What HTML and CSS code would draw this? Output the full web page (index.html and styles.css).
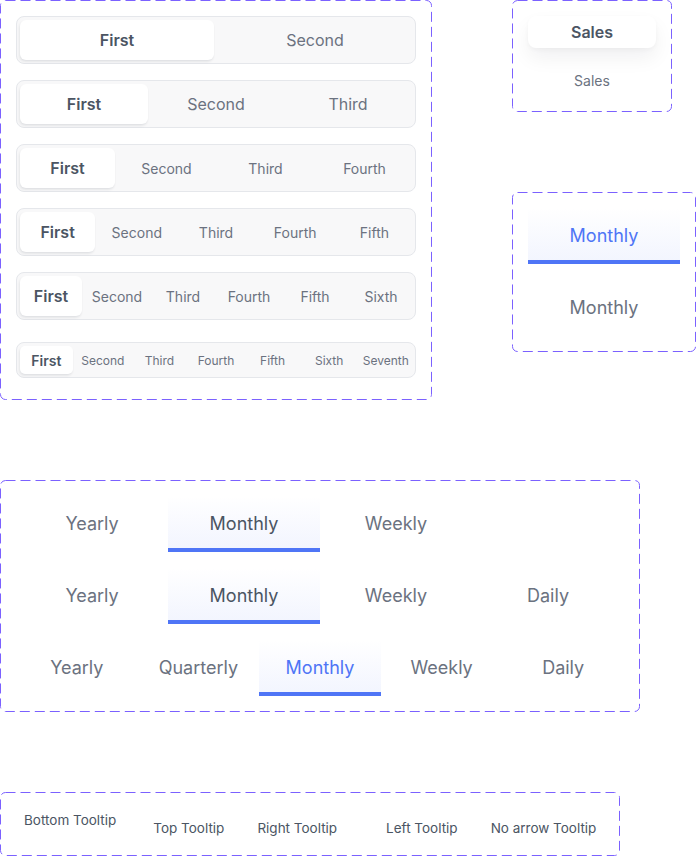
FILE: index.html
```html
<!DOCTYPE html>
<html lang="en">
<head>
<meta charset="utf-8">
<title>Components</title>
<link rel="stylesheet" href="styles.css">
</head>
<body>
<div class="canvas">
  <div class="top-row">
    <div class="frame frame-seg">
      <svg class="dash" width="432" height="400"><rect x="0.5" y="0.5" width="431" height="399" rx="5"/></svg>
      <div class="seg seg-lg">
        <div class="seg-item active">First</div>
        <div class="seg-item">Second</div>
      </div>
      <div class="seg seg-lg">
        <div class="seg-item active">First</div>
        <div class="seg-item">Second</div>
        <div class="seg-item">Third</div>
      </div>
      <div class="seg seg-md">
        <div class="seg-item active">First</div>
        <div class="seg-item">Second</div>
        <div class="seg-item">Third</div>
        <div class="seg-item">Fourth</div>
      </div>
      <div class="seg seg-md">
        <div class="seg-item active">First</div>
        <div class="seg-item">Second</div>
        <div class="seg-item">Third</div>
        <div class="seg-item">Fourth</div>
        <div class="seg-item">Fifth</div>
      </div>
      <div class="seg seg-md">
        <div class="seg-item active">First</div>
        <div class="seg-item">Second</div>
        <div class="seg-item">Third</div>
        <div class="seg-item">Fourth</div>
        <div class="seg-item">Fifth</div>
        <div class="seg-item">Sixth</div>
      </div>
      <div class="seg seg-sm">
        <div class="seg-item active">First</div>
        <div class="seg-item">Second</div>
        <div class="seg-item">Third</div>
        <div class="seg-item">Fourth</div>
        <div class="seg-item">Fifth</div>
        <div class="seg-item">Sixth</div>
        <div class="seg-item">Seventh</div>
      </div>
    </div>

    <div class="side-col">
      <div class="frame frame-sales">
        <svg class="dash" width="160" height="112"><rect x="0.5" y="0.5" width="159" height="111" rx="5"/></svg>
        <div class="sales active">Sales</div>
        <div class="sales">Sales</div>
      </div>
      <div class="frame frame-month">
        <svg class="dash" width="184" height="160"><rect x="0.5" y="0.5" width="183" height="159" rx="5"/></svg>
        <div class="tab tab-fixed active blue">Monthly</div>
        <div class="tab tab-fixed">Monthly</div>
      </div>
    </div>
  </div>

  <div class="frame frame-tabs">
    <svg class="dash" width="640" height="232"><rect x="0.5" y="0.5" width="639" height="231" rx="5"/></svg>
    <div class="tab-row">
      <div class="tab tab-fixed">Yearly</div>
      <div class="tab tab-fixed active">Monthly</div>
      <div class="tab tab-fixed">Weekly</div>
    </div>
    <div class="tab-row">
      <div class="tab tab-fixed">Yearly</div>
      <div class="tab tab-fixed active">Monthly</div>
      <div class="tab tab-fixed">Weekly</div>
      <div class="tab tab-fixed">Daily</div>
    </div>
    <div class="tab-row">
      <div class="tab tab-flex">Yearly</div>
      <div class="tab tab-flex">Quarterly</div>
      <div class="tab tab-flex active blue">Monthly</div>
      <div class="tab tab-flex">Weekly</div>
      <div class="tab tab-flex">Daily</div>
    </div>
  </div>

  <div class="frame frame-tips">
    <svg class="dash" width="620" height="64"><rect x="0.5" y="0.5" width="619" height="63" rx="5"/></svg>
    <div class="tip tip-bottom">Bottom Tooltip</div>
    <div class="tip">Top Tooltip</div>
    <div class="tip tip-right">Right Tooltip</div>
    <div class="tip">Left Tooltip</div>
    <div class="tip">No arrow Tooltip</div>
  </div>
</div>
</body>
</html>
```

FILE: styles.css
```css
* {
  box-sizing: border-box;
}

html, body {
  margin: 0;
  padding: 0;
  background: #ffffff;
}

body {
  font-family: "Inter", "Noto Sans", sans-serif;
  color: #6b7280;
}

.canvas {
  display: flex;
  flex-direction: column;
  gap: 80px;
  width: 696px;
}

.top-row {
  display: flex;
  align-items: flex-start;
  gap: 80px;
}

.side-col {
  display: flex;
  flex-direction: column;
  gap: 80px;
}

.frame {
  position: relative;
  border-radius: 5px;
}

.dash {
  position: absolute;
  left: 0;
  top: 0;
  pointer-events: none;
  fill: none;
  stroke: #7b61ff;
  stroke-width: 1;
  stroke-dasharray: 10 5;
}

/* Segmented controls */
.frame-seg {
  width: 432px;
  height: 400px;
  padding: 16px;
  display: flex;
  flex-direction: column;
  gap: 16px;
}

.seg {
  display: flex;
  gap: 4px;
  width: 400px;
  padding: 3px;
  background: #f8f8f9;
  border: 1px solid #e5e7eb;
  border-radius: 8px;
}

.seg-lg,
.seg-md {
  height: 48px;
}

.seg-sm {
  height: 36px;
  margin: 6px 0;
}

.seg-item {
  flex: 1 1 0;
  display: flex;
  align-items: center;
  justify-content: center;
  border-radius: 6px;
  color: #6b7280;
  white-space: nowrap;
}

.seg-lg .seg-item {
  font-size: 16px;
}

.seg-md .seg-item {
  font-size: 14px;
}

.seg-sm .seg-item {
  font-size: 12px;
  border-radius: 5px;
}

.seg-item.active {
  background: #ffffff;
  color: #4b5563;
  font-weight: 600;
  font-size: 16px;
  box-shadow: -1px 2px 3px rgba(17, 24, 39, 0.07), 0 1px 2px rgba(17, 24, 39, 0.04);
}

.seg-sm .seg-item.active {
  font-size: 14px;
}

/* Sales */
.frame-sales {
  width: 160px;
  height: 112px;
  padding: 16px;
  display: flex;
  flex-direction: column;
  gap: 16px;
}

.sales {
  width: 128px;
  height: 32px;
  display: flex;
  align-items: center;
  justify-content: center;
  font-size: 14px;
  color: #6b7280;
  border-radius: 8px;
}

.sales.active {
  background: #ffffff;
  color: #4b5563;
  font-size: 16px;
  font-weight: 600;
  box-shadow: 0 10px 20px rgba(17, 24, 39, 0.06), 0 2px 4px rgba(17, 24, 39, 0.03);
}

/* Tabs */
.frame-month {
  width: 184px;
  height: 160px;
  padding: 16px;
  display: flex;
  flex-direction: column;
  gap: 16px;
}

.frame-tabs {
  width: 640px;
  height: 232px;
  padding: 16px;
  display: flex;
  flex-direction: column;
  gap: 16px;
}

.tab-row {
  display: flex;
  width: 608px;
}

.tab {
  height: 56px;
  padding-top: 3px;
  display: flex;
  align-items: center;
  justify-content: center;
  font-size: 18px;
  color: #6b7280;
  white-space: nowrap;
  border-bottom: 4px solid transparent;
}

.tab-fixed {
  flex: none;
  width: 152px;
}

.tab-flex {
  flex: 1 1 0;
}

.tab.active {
  color: #4b5563;
  border-bottom-color: #4f75f6;
  background: linear-gradient(to bottom, rgba(79, 117, 246, 0) 0%, rgba(79, 117, 246, 0.07) 100%);
}

.tab.active.blue {
  color: #4f75f6;
}

/* Tooltips */
.frame-tips {
  width: 620px;
  height: 64px;
  padding: 14px 16px;
  display: flex;
  align-items: flex-start;
  gap: 17px;
}

.tip {
  padding: 4px 8px;
  font-size: 13.5px;
  line-height: 20px;
  color: #4b5563;
  white-space: nowrap;
  margin-top: 8px;
}

.tip-bottom {
  margin-top: 0;
  margin-right: 4px;
}

.tip-right {
  margin-right: 16px;
}
```
